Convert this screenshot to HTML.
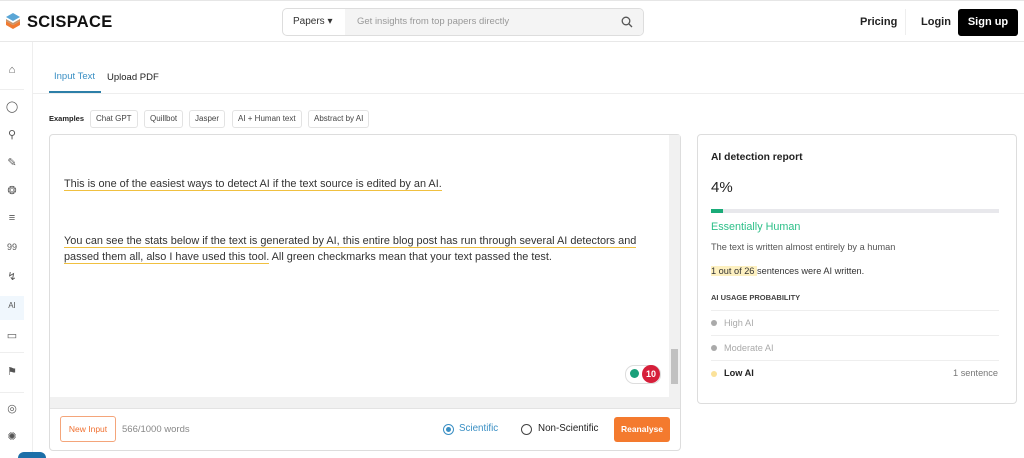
<!DOCTYPE html>
<html style="overflow:hidden"><head><style>
*{box-sizing:border-box;margin:0;padding:0}
html,body{width:1024px;height:458px;overflow:hidden}
body{background:#fff;font-family:"Liberation Sans",sans-serif;color:#222;position:relative}
.a{position:absolute}
.hdr{left:0;top:0;width:1024px;height:42px;border-bottom:1px solid #e8e8e8;border-top:1px solid #e6e6e6}
.side{left:0;top:42px;width:33px;height:416px;border-right:1px solid #eee}
.ic{position:absolute;left:5px;width:14px;height:14px;color:#555;font-size:11px;text-align:center}
.chip{position:absolute;top:110px;height:18px;border:1px solid #e3e3e3;border-radius:3px;font-size:8px;color:#444;line-height:16px;padding:0 5px}
.ed{left:49px;top:134px;width:632px;height:317px;border:1px solid #ddd;border-radius:4px}
.txt{font-size:10.9px;color:#333;position:absolute;left:64px}
.u{border-bottom:1.5px solid #f0c040}
.card{left:697px;top:134px;width:320px;height:270px;border:1px solid #ddd;border-radius:4px}
</style></head><body>
<div class="a hdr">
  <svg class="a" style="left:5px;top:11px" width="16" height="20" viewBox="0 0 16 20"><path d="M8 1 15 5 8 9 1 5Z" fill="#5aa6d6"/><path d="M1 9 8 13 15 9 15 13 8 17 1 13Z" fill="#f07b32"/><path d="M1 7 8 11 15 7 15 9 8 13 1 9Z" fill="#c8956b"/></svg>
  <div class="a" style="left:27px;top:12px;font-size:16.5px;font-weight:bold;letter-spacing:.3px;color:#111">SCISPACE</div>
  <div class="a" style="left:282px;top:7px;width:362px;height:28px;border:1px solid #ddd;border-radius:5px;overflow:hidden">
    <div class="a" style="left:0;top:0;width:62px;height:26px;font-size:10px;line-height:26px;padding-left:10px;color:#333">Papers &#9662;</div>
    <div class="a" style="left:62px;top:0;width:300px;height:26px;background:#f4f4f4;font-size:9.5px;line-height:26px;padding-left:12px;color:#999">Get insights from top papers directly</div>
    <svg class="a" style="left:338px;top:7px" width="12" height="12" viewBox="0 0 12 12"><circle cx="5" cy="5" r="3.8" fill="none" stroke="#555" stroke-width="1.3"/><path d="M8 8 11 11" stroke="#555" stroke-width="1.3"/></svg>
  </div>
  <div class="a" style="left:860px;top:15px;font-size:11px;font-weight:bold;color:#222">Pricing</div>
  <div class="a" style="left:905px;top:8px;width:1px;height:26px;background:#eee"></div>
  <div class="a" style="left:921px;top:15px;font-size:11px;font-weight:bold;color:#222">Login</div>
  <div class="a" style="left:958px;top:8px;width:60px;height:27px;background:#000;border-radius:3px;color:#fff;font-size:11px;font-weight:bold;text-align:center;line-height:27px">Sign up</div>
</div>
<div class="a side">
  <div class="ic" style="top:22px">&#8962;</div>
  <div class="a" style="left:0;top:47px;width:24px;height:1px;background:#eee"></div>
  <div class="ic" style="top:58px">&#9711;</div>
  <div class="ic" style="top:86px">&#9906;</div>
  <div class="ic" style="top:114px">&#9998;</div>
  <div class="ic" style="top:142px">&#10050;</div>
  <div class="ic" style="top:170px">&#8801;</div>
  <div class="ic" style="top:200px;font-size:9px">99</div>
  <div class="ic" style="top:228px">&#8623;</div>
  <div class="a" style="left:0;top:254px;width:24px;height:24px;background:#f0f7fd"></div>
  <div class="ic" style="top:259px;font-size:8px">AI</div>
  <div class="ic" style="top:287px">&#9645;</div>
  <div class="a" style="left:0;top:310px;width:24px;height:1px;background:#eee"></div>
  <div class="ic" style="top:323px">&#9873;</div>
  <div class="a" style="left:0;top:350px;width:24px;height:1px;background:#eee"></div>
  <div class="ic" style="top:360px">&#9678;</div>
  <div class="ic" style="top:388px">&#10042;</div>
</div>
<div class="a" style="left:33px;top:93px;width:991px;height:1px;background:#eee"></div>
<div class="a" style="left:54px;top:71px;font-size:9.5px;color:#3a8fc4">Input Text</div>
<div class="a" style="left:49px;top:91px;width:52px;height:2px;background:#2d7fa8"></div>
<div class="a" style="left:107px;top:72px;font-size:9.5px;color:#222">Upload PDF</div>
<div class="a" style="left:49px;top:114px;font-size:7.5px;font-weight:bold;color:#222">Examples</div>
<div class="chip" style="left:90px">Chat GPT</div>
<div class="chip" style="left:144px">Quillbot</div>
<div class="chip" style="left:189px">Jasper</div>
<div class="chip" style="left:232px">AI + Human text</div>
<div class="chip" style="left:308px">Abstract by AI</div>
<div class="a ed">
  <div class="a" style="right:0;top:0;width:11px;height:262px;background:#f1f1f1"></div>
  <div class="a" style="right:2px;top:214px;width:7px;height:35px;background:#c1c1c1"></div>
  <div class="a" style="left:0;top:262px;width:630px;height:11px;background:#f1f1f1"></div>
  <div class="a" style="left:0;top:273px;width:630px;height:1px;background:#e3e3e3"></div>
  <div class="a" style="left:575px;top:230px;width:36px;height:19px;border:1px solid #ddd;border-radius:9px;background:#fff"></div>
  <div class="a" style="left:580px;top:234px;width:9px;height:9px;border-radius:50%;background:#1aa07a"></div>
  <div class="a" style="left:592px;top:230px;width:18px;height:18px;border-radius:50%;background:#d61f3a;color:#fff;font-size:9px;font-weight:bold;text-align:center;line-height:18px">10</div>
  <div class="a" style="left:10px;top:281px;width:56px;height:26px;border:1px solid #f4a57a;border-radius:3px;color:#f07030;font-size:8.5px;text-align:center;line-height:24px">New Input</div>
  <div class="a" style="left:72px;top:289px;font-size:9.5px;color:#888">566/1000 words</div>
  <div class="a" style="left:393px;top:289px;width:11px;height:11px;border:1px solid #3a8fc4;border-radius:50%"><div style="margin:2px;width:5px;height:5px;border-radius:50%;background:#3a8fc4"></div></div>
  <div class="a" style="left:409px;top:288px;font-size:9.8px;color:#3a8fc4">Scientific</div>
  <div class="a" style="left:471px;top:289px;width:11px;height:11px;border:1px solid #444;border-radius:50%"></div>
  <div class="a" style="left:488px;top:288px;font-size:9.8px;color:#222">Non-Scientific</div>
  <div class="a" style="left:564px;top:282px;width:56px;height:25px;background:#f47a2e;border-radius:3px;color:#fff;font-size:8.5px;font-weight:bold;text-align:center;line-height:25px">Reanalyse</div>
</div>
<div class="txt" style="top:178px"><span class="u">This is one of the easiest ways to detect AI if the text source is edited by an AI.</span></div>
<div class="txt" style="top:233px;width:600px;line-height:16px"><span class="u">You can see the stats below if the text is generated by AI, this entire blog post has run through several AI detectors and passed them all, also I have used this tool.</span> All green checkmarks mean that your text passed the test.</div>
<div class="a card">
  <div class="a" style="left:13px;top:17px;font-size:10.3px;font-weight:bold;color:#222">AI detection report</div>
  <div class="a" style="left:13px;top:44px;font-size:15px;color:#222">4%</div>
  <div class="a" style="left:13px;top:74px;width:288px;height:4px;background:#e8e8ec"></div>
  <div class="a" style="left:13px;top:74px;width:12px;height:4px;background:#1aab78"></div>
  <div class="a" style="left:13px;top:86px;font-size:10.8px;color:#2cbf88">Essentially Human</div>
  <div class="a" style="left:13px;top:107px;font-size:9.2px;color:#555">The text is written almost entirely by a human</div>
  <div class="a" style="left:13px;top:131px;font-size:9.2px;color:#333"><span style="background:#fdf0c0">1 out of 26 </span>sentences were AI written.</div>
  <div class="a" style="left:13px;top:158px;font-size:7.5px;font-weight:bold;color:#444">AI USAGE PROBABILITY</div>
  <div class="a" style="left:13px;top:175px;width:288px;height:1px;background:#eee"></div>
  <div class="a" style="left:13px;top:185px;width:6px;height:6px;border-radius:50%;background:#aaa"></div>
  <div class="a" style="left:26px;top:183px;font-size:9.2px;color:#aaa">High AI</div>
  <div class="a" style="left:13px;top:200px;width:288px;height:1px;background:#eee"></div>
  <div class="a" style="left:13px;top:210px;width:6px;height:6px;border-radius:50%;background:#aaa"></div>
  <div class="a" style="left:26px;top:208px;font-size:9.2px;color:#aaa">Moderate AI</div>
  <div class="a" style="left:13px;top:225px;width:288px;height:1px;background:#eee"></div>
  <div class="a" style="left:13px;top:236px;width:6px;height:6px;border-radius:50%;background:#fbe29a"></div>
  <div class="a" style="left:26px;top:233px;font-size:9.2px;font-weight:bold;color:#222">Low AI</div>
  <div class="a" style="right:18px;top:233px;font-size:9.2px;color:#777">1 sentence</div>
</div>
<div class="a" style="left:18px;top:452px;width:28px;height:6px;border-radius:14px 14px 0 0;background:#1c6fa8"></div>
</body></html>
